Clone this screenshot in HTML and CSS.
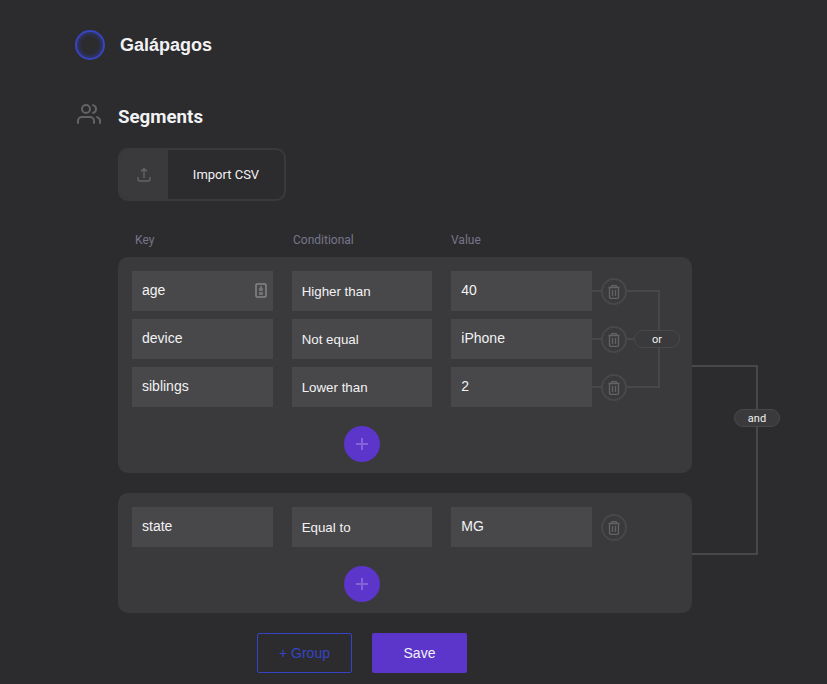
FILE: index.html
```html
<!DOCTYPE html>
<html lang="en">
<head>
  <meta charset="utf-8">
  <meta name="viewport" content="width=device-width, initial-scale=1">
  <title>Galápagos – Segments</title>
  <link rel="stylesheet" href="styles.css">
</head>
<body>
  <svg class="sprite" aria-hidden="true">
    <symbol id="trash" viewBox="0 0 12 14">
      <path d="M.5 2.500h11M3.500 2.500V1.500q0-1 1-1h3q1 0 1 1v1M1.500 2.500V12q0 1.500 1.500 1.500h6q1.500 0 1.500-1.500V2.500M4.500 5v6M7.500 5v6" fill="none" stroke="currentColor" stroke-width="1.300"/>
    </symbol>
    <symbol id="plus" viewBox="0 0 12 12">
      <path d="M6 0v12M0 6h12" fill="none" stroke="currentColor" stroke-width="2"/>
    </symbol>
  </svg>

  <header class="project">
    <span class="project-ring"></span>
    <h1 class="project-name">Galápagos</h1>
  </header>

  <main class="segments">
    <svg class="segments-icon" viewBox="0 0 24 24" aria-hidden="true">
      <path d="M17 21v-2a4 4 0 0 0-4-4H5a4 4 0 0 0-4 4v2M23 21v-2a4 4 0 0 0-3-3.870M16 3.130a4 4 0 0 1 0 7.750"/>
      <circle cx="9" cy="7" r="4"/>
    </svg>

    <div class="content">
      <h3 class="title">Segments</h3>

      <button class="import" type="button">
        <span class="import-icon">
          <svg viewBox="0 0 14 16" aria-hidden="true"><path d="M7 11V2M4 4.500l3-3 3 3M1 10v2q0 2 2 2h8q2 0 2-2v-2"/></svg>
        </span>
        <span class="import-label">Import CSV</span>
      </button>

      <form class="rules">
        <div class="labels">
          <span id="key">Key</span>
          <span id="conditional">Conditional</span>
          <span id="value">Value</span>
        </div>

        <div class="group-row">
          <section class="group">
            <div class="conditions linked">
              <div class="condition">
                <div class="fields">
                  <span class="key-field">
                    <input class="field" type="text" value="age" aria-labelledby="key">
                    <svg class="contact" viewBox="0 0 12 15" aria-hidden="true">
                      <rect x="1" y="1" width="10" height="13" rx="1" fill="none" stroke="currentColor" stroke-width="1.500"/>
                      <path d="M5 3h2v2h1v3H4V5h1zM4 9h4v3H4z" fill="currentColor" opacity="0.7"/>
                    </svg>
                  </span>
                  <select class="field" aria-labelledby="conditional"><option>Higher than</option></select>
                  <input class="field" type="text" value="40" aria-labelledby="value">
                </div>
                <button class="remove" type="button" aria-label="Remove"><svg><use href="#trash"/></svg></button>
              </div>
              <div class="condition">
                <div class="fields">
                  <input class="field" type="text" value="device" aria-labelledby="key">
                  <select class="field" aria-labelledby="conditional"><option>Not equal</option></select>
                  <input class="field" type="text" value="iPhone" aria-labelledby="value">
                </div>
                <button class="remove" type="button" aria-label="Remove"><svg><use href="#trash"/></svg></button>
              </div>
              <div class="condition">
                <div class="fields">
                  <input class="field" type="text" value="siblings" aria-labelledby="key">
                  <select class="field" aria-labelledby="conditional"><option>Lower than</option></select>
                  <input class="field" type="text" value="2" aria-labelledby="value">
                </div>
                <button class="remove" type="button" aria-label="Remove"><svg><use href="#trash"/></svg></button>
              </div>
            </div>
            <div class="or-link"><span class="pill">or</span></div>
            <button class="add" type="button" aria-label="Add condition"><svg><use href="#plus"/></svg></button>
          </section>
          <div class="rail"><div class="rail-start"><span class="pill">and</span></div></div>
        </div>

        <div class="group-row">
          <section class="group">
            <div class="conditions">
              <div class="condition">
                <div class="fields">
                  <input class="field" type="text" value="state" aria-labelledby="key">
                  <select class="field" aria-labelledby="conditional"><option>Equal to</option></select>
                  <input class="field" type="text" value="MG" aria-labelledby="value">
                </div>
                <button class="remove" type="button" aria-label="Remove"><svg><use href="#trash"/></svg></button>
              </div>
            </div>
            <button class="add" type="button" aria-label="Add condition"><svg><use href="#plus"/></svg></button>
          </section>
          <div class="rail"><div class="rail-end"></div></div>
        </div>

        <div class="actions">
          <button class="action outline" type="button">+ Group</button>
          <button class="action primary" type="submit">Save</button>
        </div>
      </form>
    </div>
  </main>
</body>
</html>
```
FILE: styles.css
```css
:root {
  --page: #2c2c2e;
  --panel: #3a3a3c;
  --field: #48484a;
  --icon: #636366;
  --text: #f2f2f4;
  --purple: #5c35cb;
  --blue: #3544c4;
  --rail: 88px;
  --link: 65px;
}

* {
  box-sizing: border-box;
}

body {
  margin: 0;
  padding: 30px 47px 11px 75px;
  background: var(--page);
  color: var(--text);
  font-family: Roboto, sans-serif;
}

button {
  padding: 0;
  border: 0;
  background: none;
  color: inherit;
  cursor: pointer;
}

.sprite {
  display: none;
}

.project {
  display: flex;
  align-items: center;
  gap: 15px;
}

.project-ring {
  width: 30px;
  height: 30px;
  border: 2px solid #3a45bd;
  border-radius: 50%;
  box-shadow: inset 0 0 4px 1px #303a94;
}

.project-name {
  margin: 0;
  font: bold 18px/24px "Liberation Sans", sans-serif;
}

.title {
  margin: 0;
  line-height: 26px;
}

.segments {
  display: grid;
  grid-template-columns: 43px minmax(0, 1fr);
  margin-top: 44px;
}

.segments-icon {
  width: 24px;
  height: 24px;
  margin-left: 2px;
  margin-top: -2px;
  fill: none;
  stroke: var(--icon);
  stroke-width: 2;
  stroke-linecap: round;
  stroke-linejoin: round;
}

.import {
  display: flex;
  width: 168px;
  height: 53px;
  margin-top: 18px;
  border: 2px solid var(--panel);
  border-radius: 10px;
  overflow: hidden;
}

.import-icon {
  display: grid;
  place-items: center;
  width: 48px;
  height: 100%;
  background: var(--panel);
}

.import-icon svg {
  width: 14px;
  height: 16px;
  fill: none;
  stroke: var(--icon);
  stroke-width: 1.4;
}

.import-label {
  flex: 1;
  align-self: center;
  font: 13px/17px Roboto, sans-serif;
}

.labels,
.fields {
  display: grid;
  grid-template-columns: repeat(3, minmax(0, 1fr));
}

.labels {
  margin: 31px 171px 9px 17px;
  color: #77758a;
  font-size: 12px;
  line-height: 16px;
}

.group-row {
  display: grid;
  grid-template-columns: minmax(0, 1fr) var(--rail);
  margin-bottom: 20px;
}

.group {
  display: grid;
  grid-template-columns: minmax(0, 1fr) var(--link);
  row-gap: 19px;
  padding: 14px 0 11px 14px;
  border-radius: 10px;
  background: var(--panel);
}

.conditions {
  display: grid;
  gap: 8px;
}

.condition {
  display: flex;
  align-items: center;
}

.fields {
  flex: 1;
  gap: 19px;
}

.field {
  width: 100%;
  height: 40px;
  padding: 0 10px;
  border: 0;
  border-radius: 0;
  background: var(--field);
  color: var(--text);
  font-family: "Liberation Sans", sans-serif;
}

input.field {
  padding-bottom: 2px;
  font-size: 14px;
}

select.field {
  appearance: none;
}

.key-field {
  position: relative;
}

.contact {
  position: absolute;
  top: 12px;
  right: 6px;
  width: 12px;
  height: 15px;
  color: #858587;
}

.condition::after {
  content: "";
  order: 1;
  width: 9px;
  height: 2px;
}

.linked .condition::after {
  background: var(--field);
}

.remove {
  display: grid;
  place-items: center;
  order: 2;
  width: 26px;
  height: 27px;
  margin-top: 1px;
  border: 2px solid var(--field);
  border-radius: 50%;
  color: var(--icon);
}

.remove svg {
  width: 12px;
  height: 14px;
}

.or-link {
  display: flex;
  align-items: center;
  width: 33px;
  margin: 19px 0;
  border: 2px solid var(--field);
  border-left: 0;
}

.or-link::before {
  content: "";
  flex: 0 0 7px;
  height: 2px;
  background: var(--field);
}

.pill {
  display: block;
  flex: none;
  width: 46px;
  height: 18px;
  border: 1px solid var(--field);
  border-radius: 9px;
  background: var(--panel);
  font-size: 11px;
  line-height: 18px;
  text-align: center;
}

.add {
  display: grid;
  place-items: center;
  grid-column: 1;
  justify-self: center;
  width: 36px;
  height: 36px;
  margin-right: 35px;
  border-radius: 50%;
  background: var(--purple);
  color: #8264d8;
}

.add svg {
  width: 12px;
  height: 12px;
}

.rail {
  display: grid;
  grid-template-rows: 1fr 1fr;
}

.rail-start,
.rail-end {
  width: 66px;
  border-right: 2px solid var(--field);
}

.rail-start {
  grid-row: 2;
  margin-bottom: -20px;
  padding: 42px 0 0 42px;
  border-top: 2px solid var(--field);
}

.rail-end {
  margin-bottom: -2px;
  border-bottom: 2px solid var(--field);
}

.actions {
  display: flex;
  justify-content: center;
  gap: 20px;
  margin-right: 188px;
  margin-left: 14px;
}

.action {
  width: 95px;
  height: 40px;
  border-radius: 2px;
  font: 14px "Liberation Sans", sans-serif;
}

.outline {
  border: 1px solid var(--blue);
  color: var(--blue);
}

.primary {
  background: var(--purple);
}
```
